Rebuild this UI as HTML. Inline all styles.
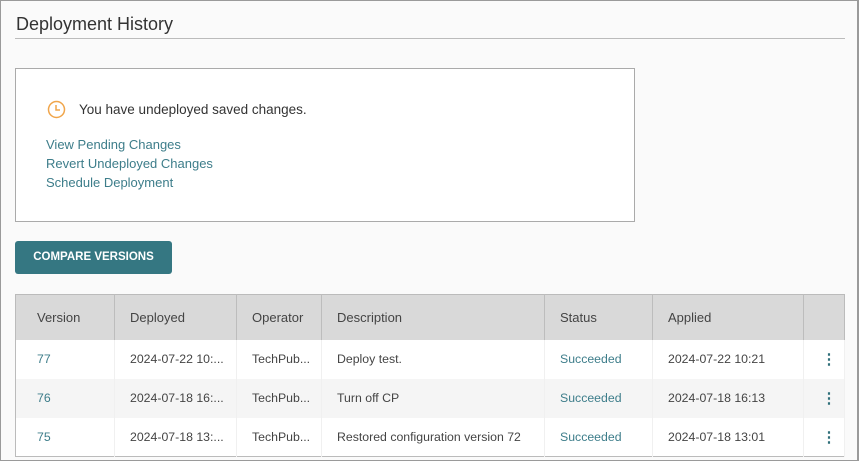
<!DOCTYPE html>
<html><head><style>
*{margin:0;padding:0;box-sizing:border-box}
body{width:859px;height:461px;overflow:hidden;background:#fff;font-family:"Liberation Sans",sans-serif;}
.frame{position:absolute;left:0;top:0;width:859px;height:461px;border:1px solid #9a9a9a;border-right:2px solid #9a9a9a;background:#fafafa}
.title{position:absolute;left:16px;top:14px;font-size:18px;color:#333}
.hr{position:absolute;left:15px;top:38px;width:830px;height:1px;background:#bbb}
.box{position:absolute;left:15px;top:68px;width:620px;height:154px;border:1px solid #aaa;background:#fff}
.msg{position:absolute;top:102px;font-size:13.5px;color:#333}
.lnk{position:absolute;left:46px;font-size:13px;color:#3d7d8a}
.btn{position:absolute;left:15px;top:241px;width:157px;height:33px;background:#357782;border-radius:3px;color:#fff;font-weight:bold;font-size:11.5px;line-height:33px;text-align:center}
table{position:absolute;left:15px;top:294px;width:830px;border-collapse:collapse;font-size:12.3px;color:#444;border:1px solid #bbb}
th{background:#d9d9d9;font-weight:normal;text-align:left;height:45px;padding-left:15px;border-right:1px solid #bdbdbd;font-size:13px;color:#444}
td{height:39px;padding-left:15px;border-right:1px solid #f0f0f0;white-space:nowrap}
th:first-child,td:first-child{padding-left:21px}
tr.g td{background:#f5f5f5}
tr.w td{background:#fff}
.a{color:#3d7d8a}
.dots{color:#2f6f7a;font-weight:bold;font-size:15px;text-align:center;padding:0 0 0 10px!important}
</style></head><body>
<div class="frame"></div>
<div class="title">Deployment History</div>
<div class="hr"></div>
<div class="box"></div>
<svg style="position:absolute;left:47px;top:100px" width="19" height="19" viewBox="0 0 19 19"><circle cx="9.5" cy="9.5" r="8" fill="none" stroke="#f0a54a" stroke-width="1.5"/><path d="M9 5v5h4" fill="none" stroke="#f0a54a" stroke-width="1.5"/></svg>
<div class="msg" style="left:79px">You have undeployed saved changes.</div>
<div class="lnk" style="top:137px">View Pending Changes</div>
<div class="lnk" style="top:156px">Revert Undeployed Changes</div>
<div class="lnk" style="top:175px">Schedule Deployment</div>
<div class="btn">COMPARE VERSIONS</div>
<table>
<tr><th style="width:99px">Version</th><th style="width:122px">Deployed</th><th style="width:85px">Operator</th><th style="width:223px">Description</th><th style="width:108px">Status</th><th style="width:151px">Applied</th><th style="border-right:none"></th></tr>
<tr class="w"><td class="a">77</td><td>2024-07-22 10:...</td><td>TechPub...</td><td>Deploy test.</td><td class="a">Succeeded</td><td>2024-07-22 10:21</td><td class="dots">⋮</td></tr>
<tr class="g"><td class="a">76</td><td>2024-07-18 16:...</td><td>TechPub...</td><td>Turn off CP</td><td class="a">Succeeded</td><td>2024-07-18 16:13</td><td class="dots">⋮</td></tr>
<tr class="w"><td class="a">75</td><td>2024-07-18 13:...</td><td>TechPub...</td><td>Restored configuration version 72</td><td class="a">Succeeded</td><td>2024-07-18 13:01</td><td class="dots">⋮</td></tr>
</table>
</body></html>
